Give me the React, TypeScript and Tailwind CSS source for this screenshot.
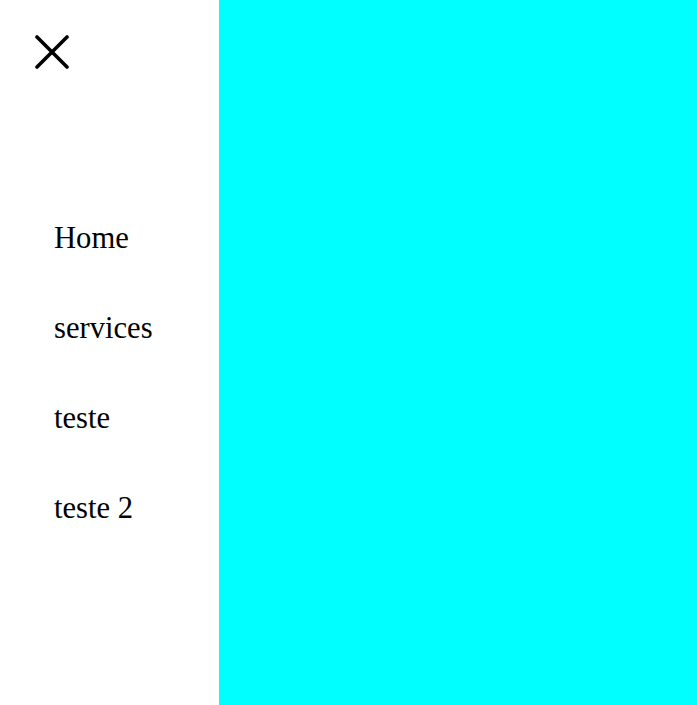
const links = ["Home", "services", "teste", "teste 2"];

export default function App() {
  return (
    <div className="flex h-screen w-full bg-[#00ffff]">
      <aside className="flex h-full w-[219px] shrink-0 flex-col bg-white">
        <button type="button" aria-label="Fechar menu" className="ml-[35px] mt-[35px] h-[34px] w-[34px]">
          <svg viewBox="0 0 34 34" className="h-[34px] w-[34px]" fill="none" stroke="black" strokeWidth={3.6} strokeLinecap="round" aria-hidden>
            <path d="M2 2 32 32M32 2 2 32" />
          </svg>
        </button>
        <nav className="mt-[152px] flex flex-col gap-[56px] pl-[54px] font-['Liberation_Serif',serif] text-[30.6px] leading-[34px] text-black">
          {links.map((l) => (
            <a key={l} href="#">
              {l}
            </a>
          ))}
        </nav>
      </aside>
    </div>
  );
}
